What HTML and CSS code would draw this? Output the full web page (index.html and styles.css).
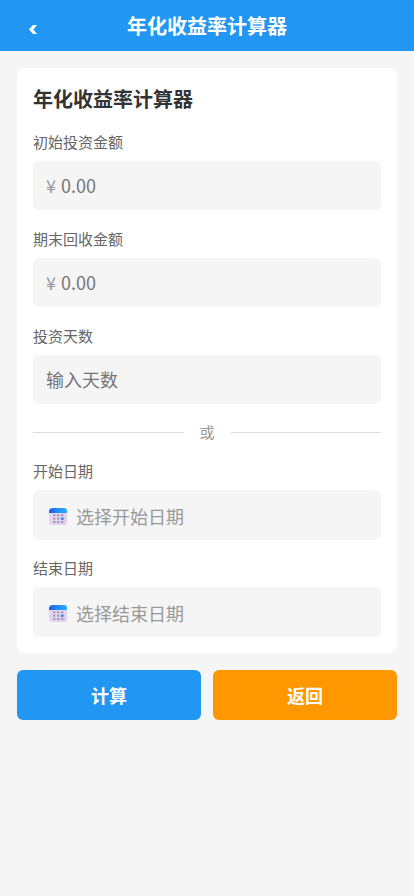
FILE: index.html
```html
<!DOCTYPE html>
<html lang="zh-CN">
<head>
<meta charset="utf-8">
<meta name="viewport" content="width=device-width, initial-scale=1">
<title>年化收益率计算器</title>
<link rel="stylesheet" href="styles.css">
</head>
<body>
<header class="topbar">
  <button class="back" type="button" aria-label="返回"><svg class="chevron" viewBox="0 0 8 9" aria-hidden="true"><path d="M4 0H8L4.4 4.5 8 9H4L0 4.5z" fill="currentColor"/></svg></button>
  <h1 class="topbar-title">年化收益率计算器</h1>
</header>
<main class="page">
  <form>
    <section class="card">
      <h2 class="card-title">年化收益率计算器</h2>
      <div class="field">
        <label class="label" for="initial">初始投资金额</label>
        <div class="box"><span class="currency">¥</span><input class="input" id="initial" type="text" inputmode="decimal" placeholder="0.00"></div>
      </div>
      <div class="field">
        <label class="label" for="final">期末回收金额</label>
        <div class="box"><span class="currency">¥</span><input class="input" id="final" type="text" inputmode="decimal" placeholder="0.00"></div>
      </div>
      <div class="field">
        <label class="label" for="days">投资天数</label>
        <div class="box"><input class="input" id="days" type="text" inputmode="numeric" placeholder="输入天数"></div>
      </div>
      <div class="divider"><span>或</span></div>
      <div class="field">
        <label class="label" for="start">开始日期</label>
        <button class="box date" id="start" type="button">
          <svg class="calendar" viewBox="0 0 18 18" aria-hidden="true"><use href="#calendar"/></svg>选择开始日期
        </button>
      </div>
      <div class="field date-field">
        <label class="label" for="end">结束日期</label>
        <button class="box date" id="end" type="button">
          <svg class="calendar" viewBox="0 0 18 18" aria-hidden="true"><use href="#calendar"/></svg>选择结束日期
        </button>
      </div>
    </section>
    <div class="actions">
      <button class="action primary" type="button">计算</button>
      <button class="action secondary" type="button">返回</button>
    </div>
  </form>
</main>
<svg class="defs" width="0" height="0" aria-hidden="true">
  <defs>
    <linearGradient id="top" x1="0" x2="1"><stop offset="0" stop-color="#2457dc"/><stop offset=".45" stop-color="#1f8bfa"/><stop offset="1" stop-color="#2eaaf8"/></linearGradient>
    <linearGradient id="sheet" x1="0" x2="1" y1="0" y2="1"><stop offset="0" stop-color="#e3dcf2"/><stop offset="1" stop-color="#e2cdec"/></linearGradient>
    <symbol id="calendar" viewBox="0 0 18 18">
      <rect x="0" y="2" width="18" height="15" rx="3" fill="url(#sheet)"/>
      <path d="M0 5V4a4 4 0 0 1 4-4h11a3 3 0 0 1 3 3v2z" fill="url(#top)"/>
      <g fill="#a69db5"><path d="M4 6.2h2.4v2H4zM8 6.2h2.4v2H8zM12 6.2h2.4v2H12zM4 9.7h2.4v2H4zM8 9.7h2.4v2H8zM4 13h2.4v2H4zM8 13h2.4v2H8zM12 13h2.4v2H12z"/></g>
      <path d="M12 9.5h2.6v2.4H12z" fill="#2389f4"/>
    </symbol>
  </defs>
</svg>
</body>
</html>
```
FILE: styles.css
```css
* { box-sizing: border-box; }
body {
  margin: 0;
  background: #f5f5f5;
  color: #333;
  font-family: "Noto Sans CJK SC", sans-serif;
}
button, input { font: inherit; }
.defs { position: absolute; }
.topbar {
  display: grid;
  grid-template-columns: 32px 1fr 32px;
  align-items: center;
  padding: 11px 17px 10px;
  background: #2196f3;
  color: #fff;
}
.back {
  display: flex;
  justify-content: center;
  padding: 7px 0 0;
  border: 0;
  background: none;
  color: inherit;
}
.chevron { width: 8px; height: 9px; }
.topbar-title {
  margin: 0;
  font-size: 20px;
  line-height: 30px;
  text-align: center;
}
.page { padding: 17px; }
.card {
  padding: 16px;
  border-radius: 8px;
  background: #fff;
}
.card-title {
  margin: 0 0 16px;
  font-size: 20px;
  line-height: 30px;
}
.field + .field { margin-top: 17px; }
.field + .date-field { margin-top: 16px; }
.label {
  display: block;
  margin-bottom: 7px;
  color: #666;
  font-size: 15px;
  line-height: 24px;
}
.box {
  display: flex;
  align-items: center;
  width: 100%;
  height: 49px;
  padding: 0 13px 2px;
  border: 0;
  border-radius: 6px;
  background: #f5f5f5;
  font-size: 18px;
}
.currency { margin-right: 5px; color: #999; }
.input {
  flex: 1;
  min-width: 0;
  padding: 0;
  border: 0;
  outline: 0;
  background: none;
  color: #333;
}
.input::placeholder { color: #757575; }
.date { height: 50px; padding: 1px 16px 0; color: #999; }
.calendar { width: 18px; height: 18px; margin: 2px 9px 0 0; }
.divider {
  display: flex;
  align-items: center;
  gap: 16px;
  margin: 16px 0 15px;
  color: #999;
  font-size: 15px;
  line-height: 24px;
}
.divider::before, .divider::after {
  content: "";
  flex: 1;
  height: 1px;
  background: #ddd;
}
.actions {
  display: grid;
  grid-template-columns: 1fr 1fr;
  gap: 12px;
  margin-top: 17px;
}
.action {
  height: 50px;
  border: 0;
  border-radius: 6px;
  color: #fff;
  font-size: 18px;
  font-weight: 700;
}
.primary { background: #2196f3; }
.secondary { background: #ff9800; }
```
